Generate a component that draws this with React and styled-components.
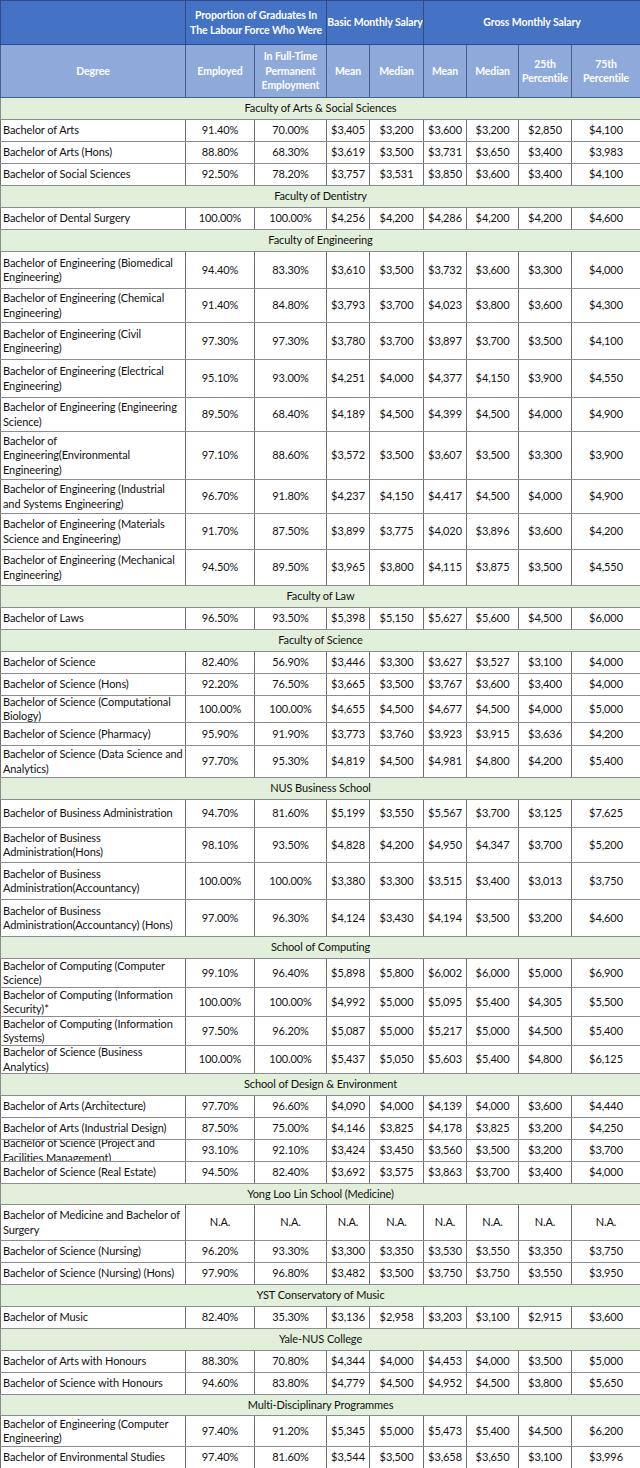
import React from "react";
import styled, { createGlobalStyle } from "styled-components";

const GlobalStyle = createGlobalStyle`
  body {
    margin: 0;
    background: #ffffff;
    font-family: Lato, "Liberation Sans", sans-serif;
  }
`;

const COLS = [185, 69, 72, 43, 54, 43, 52, 53, 69];

const sections = [
  {
    name: "Faculty of Arts & Social Sciences",
    rows: [
      ["Bachelor of Arts", "91.40%", "70.00%", "$3,405", "$3,200", "$3,600", "$3,200", "$2,850", "$4,100", 22],
      ["Bachelor of Arts (Hons)", "88.80%", "68.30%", "$3,619", "$3,500", "$3,731", "$3,650", "$3,400", "$3,983", 22],
      ["Bachelor of Social Sciences", "92.50%", "78.20%", "$3,757", "$3,531", "$3,850", "$3,600", "$3,400", "$4,100", 22],
    ],
  },
  {
    name: "Faculty of Dentistry",
    rows: [
      ["Bachelor of Dental Surgery", "100.00%", "100.00%", "$4,256", "$4,200", "$4,286", "$4,200", "$4,200", "$4,600", 22],
    ],
  },
  {
    name: "Faculty of Engineering",
    rows: [
      ["Bachelor of Engineering (Biomedical Engineering)", "94.40%", "83.30%", "$3,610", "$3,500", "$3,732", "$3,600", "$3,300", "$4,000", 37],
      ["Bachelor of Engineering (Chemical Engineering)", "91.40%", "84.80%", "$3,793", "$3,700", "$4,023", "$3,800", "$3,600", "$4,300", 34],
      ["Bachelor of Engineering (Civil Engineering)", "97.30%", "97.30%", "$3,780", "$3,700", "$3,897", "$3,700", "$3,500", "$4,100", 37],
      ["Bachelor of Engineering (Electrical Engineering)", "95.10%", "93.00%", "$4,251", "$4,000", "$4,377", "$4,150", "$3,900", "$4,550", 38],
      ["Bachelor of Engineering (Engineering Science)", "89.50%", "68.40%", "$4,189", "$4,500", "$4,399", "$4,500", "$4,000", "$4,900", 34],
      ["Bachelor of Engineering(Environmental Engineering)", "97.10%", "88.60%", "$3,572", "$3,500", "$3,607", "$3,500", "$3,300", "$3,900", 48],
      ["Bachelor of Engineering (Industrial and Systems Engineering)", "96.70%", "91.80%", "$4,237", "$4,150", "$4,417", "$4,500", "$4,000", "$4,900", 34],
      ["Bachelor of Engineering (Materials Science and Engineering)", "91.70%", "87.50%", "$3,899", "$3,775", "$4,020", "$3,896", "$3,600", "$4,200", 36],
      ["Bachelor of Engineering (Mechanical Engineering)", "94.50%", "89.50%", "$3,965", "$3,800", "$4,115", "$3,875", "$3,500", "$4,550", 36],
    ],
  },
  {
    name: "Faculty of Law",
    rows: [
      ["Bachelor of Laws", "96.50%", "93.50%", "$5,398", "$5,150", "$5,627", "$5,600", "$4,500", "$6,000", 22],
    ],
  },
  {
    name: "Faculty of Science",
    rows: [
      ["Bachelor of Science", "82.40%", "56.90%", "$3,446", "$3,300", "$3,627", "$3,527", "$3,100", "$4,000", 22],
      ["Bachelor of Science (Hons)", "92.20%", "76.50%", "$3,665", "$3,500", "$3,767", "$3,600", "$3,400", "$4,000", 22],
      ["Bachelor of Science (Computational Biology)", "100.00%", "100.00%", "$4,655", "$4,500", "$4,677", "$4,500", "$4,000", "$5,000", 27],
      ["Bachelor of Science (Pharmacy)", "95.90%", "91.90%", "$3,773", "$3,760", "$3,923", "$3,915", "$3,636", "$4,200", 23],
      ["Bachelor of Science (Data Science and Analytics)", "97.70%", "95.30%", "$4,819", "$4,500", "$4,981", "$4,800", "$4,200", "$5,400", 32],
    ],
  },
  {
    name: "NUS Business School",
    rows: [
      ["Bachelor of Business Administration", "94.70%", "81.60%", "$5,199", "$3,550", "$5,567", "$3,700", "$3,125", "$7,625", 28],
      ["Bachelor of Business Administration(Hons)", "98.10%", "93.50%", "$4,828", "$4,200", "$4,950", "$4,347", "$3,700", "$5,200", 35],
      ["Bachelor of Business Administration(Accountancy)", "100.00%", "100.00%", "$3,380", "$3,300", "$3,515", "$3,400", "$3,013", "$3,750", 37],
      ["Bachelor of Business Administration(Accountancy) (Hons)", "97.00%", "96.30%", "$4,124", "$3,430", "$4,194", "$3,500", "$3,200", "$4,600", 37],
    ],
  },
  {
    name: "School of Computing",
    rows: [
      ["Bachelor of Computing (Computer Science)", "99.10%", "96.40%", "$5,898", "$5,800", "$6,002", "$6,000", "$5,000", "$6,900", 29],
      ["Bachelor of Computing (Information Security)*", "100.00%", "100.00%", "$4,992", "$5,000", "$5,095", "$5,400", "$4,305", "$5,500", 29],
      ["Bachelor of Computing (Information Systems)", "97.50%", "96.20%", "$5,087", "$5,000", "$5,217", "$5,000", "$4,500", "$5,400", 29],
      ["Bachelor of Science (Business Analytics)", "100.00%", "100.00%", "$5,437", "$5,050", "$5,603", "$5,400", "$4,800", "$6,125", 28],
    ],
  },
  {
    name: "School of Design & Environment",
    rows: [
      ["Bachelor of Arts (Architecture)", "97.70%", "96.60%", "$4,090", "$4,000", "$4,139", "$4,000", "$3,600", "$4,440", 22],
      ["Bachelor of Arts (Industrial Design)", "87.50%", "75.00%", "$4,146", "$3,825", "$4,178", "$3,825", "$3,200", "$4,250", 22],
      ["Bachelor of Science (Project and Facilities Management)", "93.10%", "92.10%", "$3,424", "$3,450", "$3,560", "$3,500", "$3,200", "$3,700", 22],
      ["Bachelor of Science (Real Estate)", "94.50%", "82.40%", "$3,692", "$3,575", "$3,863", "$3,700", "$3,400", "$4,000", 22],
    ],
  },
  {
    name: "Yong Loo Lin School (Medicine)",
    height: 21,
    rows: [
      ["Bachelor of Medicine and Bachelor of Surgery", "N.A.", "N.A.", "N.A.", "N.A.", "N.A.", "N.A.", "N.A.", "N.A.", 36],
      ["Bachelor of Science (Nursing)", "96.20%", "93.30%", "$3,300", "$3,350", "$3,530", "$3,550", "$3,350", "$3,750", 22],
      ["Bachelor of Science (Nursing) (Hons)", "97.90%", "96.80%", "$3,482", "$3,500", "$3,750", "$3,750", "$3,550", "$3,950", 22],
    ],
  },
  {
    name: "YST Conservatory of Music",
    rows: [
      ["Bachelor of Music", "82.40%", "35.30%", "$3,136", "$2,958", "$3,203", "$3,100", "$2,915", "$3,600", 22],
    ],
  },
  {
    name: "Yale-NUS College",
    rows: [
      ["Bachelor of Arts with Honours", "88.30%", "70.80%", "$4,344", "$4,000", "$4,453", "$4,000", "$3,500", "$5,000", 22],
      ["Bachelor of Science with Honours", "94.60%", "83.80%", "$4,779", "$4,500", "$4,952", "$4,500", "$3,800", "$5,650", 22],
    ],
  },
  {
    name: "Multi-Disciplinary Programmes",
    height: 21,
    rows: [
      ["Bachelor of Engineering (Computer Engineering)", "97.40%", "91.20%", "$5,345", "$5,000", "$5,473", "$5,400", "$4,500", "$6,200", 31],
      ["Bachelor of Environmental Studies", "97.40%", "81.60%", "$3,544", "$3,500", "$3,658", "$3,650", "$3,100", "$3,996", 22],
    ],
  },
];

const SUB_LABELS = [
  "Degree",
  "Employed",
  "In Full-Time Permanent Employment",
  "Mean",
  "Median",
  "Mean",
  "Median",
  "25th Percentile",
  "75th Percentile",
];

const App = () => {
  return (
    <>
      <GlobalStyle />
      <Table>
        <colgroup>
          {COLS.map((w, i) => (
            <col key={i} style={{ width: w }} />
          ))}
        </colgroup>
        <thead>
          <tr>
            <TopHead>
              <Inner h={43} />
            </TopHead>
            <TopHead colSpan={2}>
              <Inner h={43} nowrap>
                Proportion of Graduates In
                <br />
                The Labour Force Who Were
              </Inner>
            </TopHead>
            <TopHead colSpan={2}>
              <Inner h={43} nowrap>
                Basic Monthly Salary
              </Inner>
            </TopHead>
            <TopHead colSpan={4}>
              <Inner h={43} nowrap>
                Gross Monthly Salary
              </Inner>
            </TopHead>
          </tr>
          <tr>
            {SUB_LABELS.map((label, i) => (
              <SubHead key={i}>
                <Inner h={52}>{label}</Inner>
              </SubHead>
            ))}
          </tr>
        </thead>
        <tbody>
          {sections.map((s) => (
            <React.Fragment key={s.name}>
              <tr>
                <SectionCell colSpan={9}>
                  <Inner h={(s.height || 22) - 1}>{s.name}</Inner>
                </SectionCell>
              </tr>
              {s.rows.map((r) => {
                const h = r[9] - 1;
                return (
                  <tr key={r[0]}>
                    <Cell>
                      <Inner h={h} left>
                        {r[0]}
                      </Inner>
                    </Cell>
                    {r.slice(1, 9).map((v, i) => (
                      <Cell key={i}>
                        <Inner h={h}>{v}</Inner>
                      </Cell>
                    ))}
                  </tr>
                );
              })}
            </React.Fragment>
          ))}
        </tbody>
      </Table>
    </>
  );
};

const Table = styled.table`
  width: 640px;
  table-layout: fixed;
  border-collapse: collapse;
  font-family: Lato, "Liberation Sans", sans-serif;
  font-size: 11px;
  letter-spacing: -0.1px;
  color: #111111;
`;

const Inner = styled.div`
  height: ${(p) => p.h}px;
  display: flex;
  align-items: center;
  justify-content: ${(p) => (p.left ? "flex-start" : "center")};
  text-align: ${(p) => (p.left ? "left" : "center")};
  padding: 0 ${(p) => (p.left ? "2px" : "1px")};
  overflow: hidden;
  white-space: ${(p) => (p.nowrap ? "nowrap" : "normal")};
  line-height: 14.5px;
`;

const TopHead = styled.th`
  padding: 0;
  background: #4472c4;
  color: #ffffff;
  font-size: 10.5px;
  font-weight: 700;
  letter-spacing: -0.1px;
  border: 1px solid #2f4a86;
`;

const SubHead = styled.th`
  padding: 0;
  background: #8eaadb;
  color: #ffffff;
  font-size: 10.5px;
  font-weight: 700;
  border: 1px solid #44608f;
`;

const SectionCell = styled.td`
  padding: 0;
  background: #e2efda;
  border: 1px solid #8c8c8c;
`;

const Cell = styled.td`
  padding: 0;
  background: #ffffff;
  border: 1px solid #8c8c8c;
  border-left-color: #6f6f6f;
  border-right-color: #6f6f6f;
`;

export default App;
